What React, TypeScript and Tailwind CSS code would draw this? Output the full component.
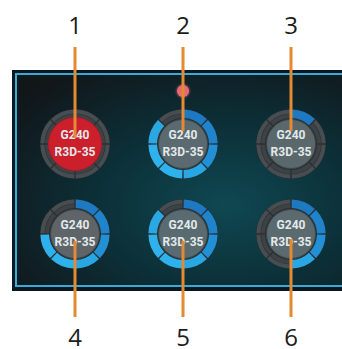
const BLUE: Record<number, string> = {
  0: "#1f84cc",
  1: "#1d79c2",
  2: "#2396d8",
  3: "#2aa8e4",
  4: "#2db2ee",
  5: "#2db2ee",
  6: "#29a6e4",
  7: "#2290d6",
};

const dials = [
  {
    label: "1",
    on: [] as number[],
    inner: "w-[54px] h-[54px] bg-[#cc1f2c] border-[#b51a26]",
    line: "top-[-62px] h-[91px]",
    top: true,
  },
  {
    label: "2",
    on: [0, 1, 3, 4, 5, 6, 7],
    inner: "w-[50px] h-[50px] bg-[#5b6a70] border-[#3c474b]",
    line: "top-[-62px] h-[84px]",
    top: true,
    dot: true,
  },
  {
    label: "3",
    on: [1],
    inner: "w-[50px] h-[50px] bg-[#5a686c] border-[#3c474b]",
    line: "top-[-62px] h-[84px]",
    top: true,
  },
  {
    label: "4",
    on: [0, 1, 4, 5, 6, 7],
    inner: "w-[50px] h-[50px] bg-[#5e6468] border-[#3c4448]",
    line: "top-[42px] h-[76px]",
    top: false,
  },
  {
    label: "5",
    on: [0, 1, 3, 4, 5, 6, 7],
    inner: "w-[50px] h-[50px] bg-[#596a70] border-[#3c474b]",
    line: "top-[42px] h-[76px]",
    top: false,
  },
  {
    label: "6",
    on: [0, 1, 6, 7],
    inner: "w-[50px] h-[50px] bg-[#5a6a6e] border-[#3c474b]",
    line: "top-[40px] h-[78px]",
    top: false,
  },
];

function arc(a0: number, a1: number, r0: number, r1: number) {
  const p = (a: number, r: number) => {
    const t = (a * Math.PI) / 180;
    return `${(r * Math.cos(t)).toFixed(2)} ${(-r * Math.sin(t)).toFixed(2)}`;
  };
  return `M${p(a0, r1)} A${r1} ${r1} 0 0 0 ${p(a1, r1)} L${p(a1, r0)} A${r0} ${r0} 0 0 1 ${p(a0, r0)} Z`;
}

function Ring({ on }: { on: number[] }) {
  return (
    <svg className="absolute inset-0" width="70" height="70" viewBox="-35 -35 70 70">
      <circle r="35" fill="#2a2f32" />
      {[0, 1, 2, 3, 4, 5, 6, 7].map((k) => {
        const a0 = k * 45 + 1.3;
        const a1 = (k + 1) * 45 - 1.3;
        if (on.includes(k)) {
          return <path key={k} d={arc(a0, a1, 26, 34.6)} fill={BLUE[k]} />;
        }
        return (
          <g key={k}>
            <path d={arc(a0, a1, 30.6, 34.6)} fill="#474d50" />
            <path d={arc(a0, a1, 26, 30)} fill="#3c4245" />
          </g>
        );
      })}
    </svg>
  );
}

function Dial({ d }: { d: (typeof dials)[number] }) {
  return (
    <div className="relative w-[70px] h-[70px] flex items-center justify-center">
      <Ring on={d.on} />
      {d.dot && (
        <div className="absolute left-1/2 -translate-x-1/2 top-[-24px] w-[12px] h-[12px] rounded-full bg-[#e66a76] shadow-[0_0_3px_#e66a76]" />
      )}
      <div
        className={`relative rounded-full border flex flex-col items-center justify-center text-[#e2e9eb] text-[12px] leading-[17px] font-bold ${d.inner}`}
        style={{ fontFamily: "Roboto, 'Liberation Sans', sans-serif" }}
      >
        <span>G240</span>
        <span>R3D-35</span>
      </div>
      <div
        className={`absolute left-1/2 -translate-x-1/2 w-[3px] bg-[#e38a33] z-10 ${d.line}`}
      />
    </div>
  );
}

export default function App() {
  return (
    <div
      className="w-[342px] h-[349px] overflow-hidden bg-white"
      style={{ fontFamily: "'Open Sans', 'Liberation Sans', sans-serif" }}
    >
      {/* top labels */}
      <div className="grid grid-cols-[108px_108px_108px] pl-[21px] pt-[13px] text-[24px] leading-[24px] text-[#1c1c1c]">
        {["1", "2", "3"].map((n) => (
          <div key={n} className="text-center">
            {n}
          </div>
        ))}
      </div>

      {/* panel */}
      <div className="mt-[33px] ml-[12px] w-[340px] bg-[#0b1822] pt-[3px] pl-[3px] pb-[4px]">
        <div className="border-2 border-r-0 border-[#3aaad6] bg-[radial-gradient(ellipse_at_62%_62%,#0f4852_0%,#0c2f37_45%,#111619_90%)]">
          <div className="grid grid-cols-[108px_108px_108px] gap-y-[20px] pl-[4px] pt-[34px] pb-[16px]">
            {dials.map((d) => (
              <div key={d.label} className="flex justify-center">
                <Dial d={d} />
              </div>
            ))}
          </div>
        </div>
      </div>

      {/* bottom labels */}
      <div className="grid grid-cols-[108px_108px_108px] pl-[21px] mt-[34px] text-[24px] leading-[24px] text-[#1c1c1c]">
        {["4", "5", "6"].map((n) => (
          <div key={n} className="text-center">
            {n}
          </div>
        ))}
      </div>
    </div>
  );
}
